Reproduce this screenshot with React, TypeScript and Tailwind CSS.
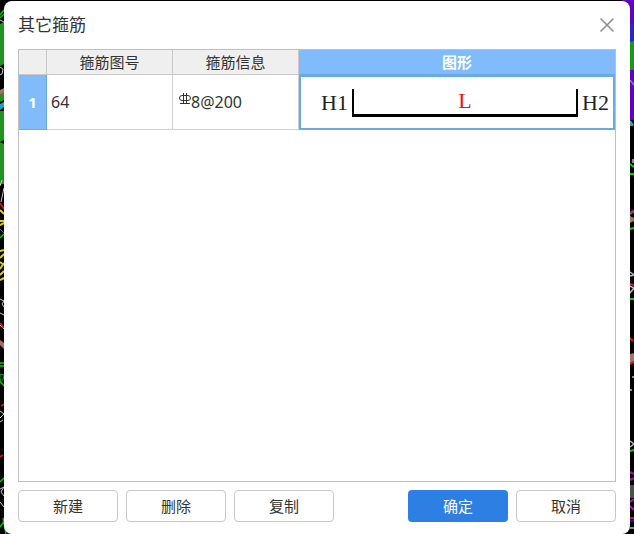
import React, { useState } from "react";

const rows = [{ id: 1, figure: "64", info: "8@200", left: "H1", length: "L", right: "H2" }];

const buttonClass =
  "h-8 w-[100px] rounded border border-[#c8c8c8] bg-white text-[15px] leading-5 text-[#333333] hover:bg-gray-50";

// Strips of the CAD drawing that stay visible around the dialog
function DrawingLeft() {
  return (
    <svg
      className="absolute left-0 top-0 h-[534px] w-3"
      viewBox="0 0 12 534"
      fill="none"
      aria-hidden="true"
    >
      <path d="M0 24l4-2v42l-4 2zM0 95l4-4v9l-4 2zM0 111h4v73H0z" fill="#1e961e" />
      <path d="M0 15l4-5M0 18l4-4M0 238l4-4M0 363h4M0 366h4M0 381l4 5M0 482l4-4M0 527l5-7M3 518l3 16" stroke="#00c800" strokeWidth="1.5" />
      <path d="M0 20l4 2M0 67l3 2-1 5-2 1M0 186l2-6M1 202l3-14M0 299l4 2-2 3 2 3M0 313l4 2M0 325l4 4M0 411l4 3-4 4M0 422l3-2M0 489l4-2-3 5 3 4M0 502l4 5" stroke="#c8c8c8" />
      <path d="M0 90l4-2v4l-4 3zM0 340l4 3v6l-4-4z" fill="#a87462" />
      <path d="M0 104l4-2v5l-4 3z" fill="#18a8b8" />
      <path d="M0 142l4-2v4z" fill="#000" />
      <path d="M0 203l4 6M0 323l4 5M1 406l3-2M0 457l3-2" stroke="#c01818" strokeWidth="2" />
      <path d="M0 210l4 4M0 221h4M0 225l4-2M0 251l4-1M0 258l4-4M0 262l4 3M0 269l4-6M0 275l4-4M0 280l4-2" stroke="#d8d000" strokeWidth="2" />
      <path d="M0 374l4 1-1 5H0zM0 229l4 4" stroke="#00a830" />
    </svg>
  );
}

function DrawingRight() {
  return (
    <svg
      className="absolute right-0 top-0 h-[534px] w-3"
      viewBox="0 0 12 534"
      fill="none"
      aria-hidden="true"
    >
      <path d="M0 0h12v120H0z" fill="#6200c0" />
      <path d="M7 23h5v19H7z" fill="#2828c0" />
      <path d="M8 42l4-1v29H8z" fill="#1e961e" />
      <path d="M8 80l4 5" stroke="#908098" strokeWidth="1.5" />
      <path d="M8 123l3 1v2H8zM8 216l4 2v3l-4 2zM8 354l4-1v8l-4 3z" fill="#a87462" />
      <path d="M8 121l3 4" stroke="#18b8c8" strokeWidth="2" />
      <path d="M8 164l4 3M8 174h4M8 229l4-1M8 299h4M8 451l4-1M8 214l4-3" stroke="#00d000" strokeWidth="2" />
      <path d="M8 213l4-3M8 472l4 2M8 480l4-2M8 502l4-3M8 506l4 4" stroke="#c000c0" strokeWidth="2" />
      <path d="M11 159v4M8 272l4 3-4 1M8 286l4 2-4 5M10 377h2M8 390h2M8 441l4 3-4 3M8 528h4" stroke="#b8b8b8" strokeWidth="1.5" />
      <path d="M8 485h4v13H8z" fill="#505050" />
      <path d="M8 284l4 1M8 338l3 3M8 364l4-2M8 518h4" stroke="#d01818" strokeWidth="2" />
      <path d="M8 521h4" stroke="#1010d0" strokeWidth="2" />
    </svg>
  );
}

function RebarIcon() {
  return (
    <svg className="h-[14px] w-3" viewBox="0 0 12 14" fill="none" stroke="#333333" aria-hidden="true">
      <rect x="0.5" y="3.5" width="11" height="5" rx="2.5" />
      <path d="M4.5 1v11M7.5 1v11M1 11.5h10" />
    </svg>
  );
}

function StirrupShape({ left, length, right }: { left: string; length: string; right: string }) {
  return (
    <div className="flex items-center pl-5 pr-1 font-['Liberation_Serif',serif] text-[22px] leading-6 text-[#222222]">
      <span>{left}</span>
      <span className="ml-1 flex h-7 flex-1 items-center justify-center border-x-2 border-b-[3px] border-black text-[#f01020]">
        {length}
      </span>
      <span className="ml-1">{right}</span>
    </div>
  );
}

export default function App() {
  const [selected, setSelected] = useState(1);

  return (
    <div className="relative min-h-screen bg-black px-1 pt-px font-['Noto_Sans','Noto_Sans_CJK_SC',sans-serif] text-[#333333]">
      <DrawingLeft />
      <DrawingRight />
      <div
        role="dialog"
        aria-labelledby="title"
        className="relative flex min-h-[calc(100vh-1px)] flex-col rounded-lg bg-white px-[14px] pb-3"
      >
        <header className="flex h-12 items-center justify-between">
          <h1 id="title" className="text-[17px] leading-6">
            其它箍筋
          </h1>
          <button type="button" aria-label="关闭" className="p-px text-[#909090]">
            <svg className="size-4" viewBox="0 0 16 16" fill="none" stroke="currentColor" strokeWidth="1.6">
              <path d="M1.5 1.5l13 13M14.5 1.5l-13 13" />
            </svg>
          </button>
        </header>

        <main className="flex-1 border border-[#c0c0c0]">
          <table className="w-full table-fixed border-separate border-spacing-0 text-[15px] leading-5">
            <colgroup>
              <col className="w-7" />
              <col className="w-[126px]" />
              <col className="w-[126px]" />
              <col />
            </colgroup>
            <thead>
              <tr className="h-[25px] bg-[#efefef]">
                <td className="border-b border-r border-[#c8c8c8]"></td>
                <th className="border-b border-r border-[#c8c8c8] p-0 font-normal">箍筋图号</th>
                <th className="border-b border-r border-[#c8c8c8] p-0 font-normal">箍筋信息</th>
                <th className="border-b border-[#6aa8e8] bg-[#80bbfb] p-0 font-bold text-white">图形</th>
              </tr>
            </thead>
            <tbody>
              {rows.map((row) => (
                <tr key={row.id} className="h-[55px]" onClick={() => setSelected(row.id)}>
                  <th className="border-b border-r border-[#6aa8e8] bg-[#80bbfb] p-0 font-bold text-white">
                    {row.id}
                  </th>
                  <td className="border-b border-r border-[#d0d0d0] px-1 py-0 text-base leading-5">
                    {row.figure}
                  </td>
                  <td className="border-b border-r border-[#d0d0d0] px-1.5 py-0 text-base leading-5">
                    <div className="flex items-start">
                      <RebarIcon />
                      <span>{row.info}</span>
                    </div>
                  </td>
                  <td
                    className={
                      selected === row.id
                        ? "border-2 border-[#6aa8e8] p-0"
                        : "border-2 border-transparent border-b-[#d0d0d0] p-0"
                    }
                  >
                    <StirrupShape left={row.left} length={row.length} right={row.right} />
                  </td>
                </tr>
              ))}
            </tbody>
          </table>
        </main>

        <footer className="flex justify-between pt-2">
          <div className="flex gap-2">
            <button type="button" className={buttonClass}>新建</button>
            <button type="button" className={buttonClass}>删除</button>
            <button type="button" className={buttonClass}>复制</button>
          </div>
          <div className="flex gap-2">
            <button
              type="button"
              className="h-8 w-[100px] rounded bg-[#2d7fe3] text-[15px] leading-5 text-white hover:bg-[#2672d0]"
            >
              确定
            </button>
            <button type="button" className={buttonClass}>取消</button>
          </div>
        </footer>
      </div>
    </div>
  );
}
